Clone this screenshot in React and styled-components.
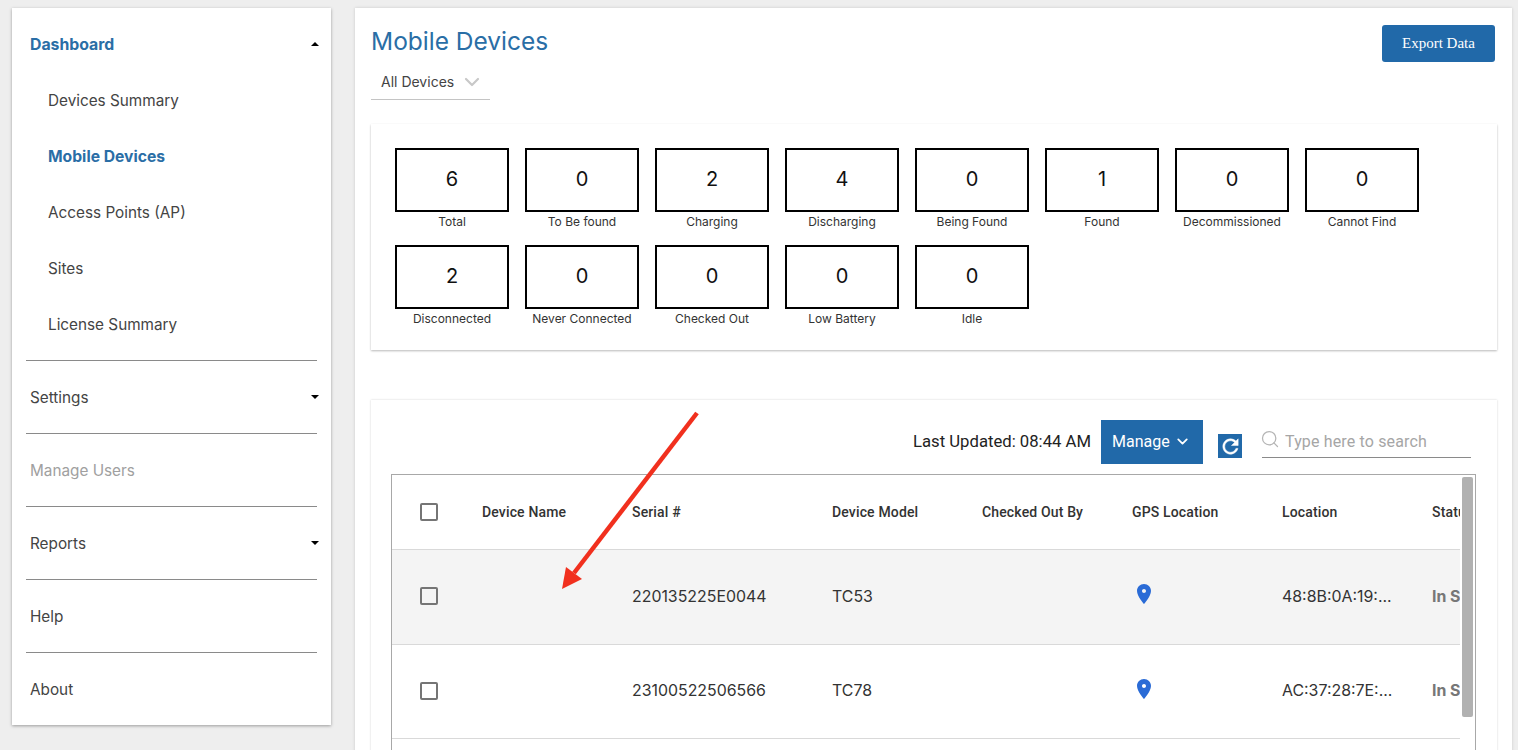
import * as React from "react";
import styled, { createGlobalStyle } from "styled-components";
import { ChevronDown, Search } from "lucide-react";

const BLUE = "#2169a9";
const INTER = `Inter, "Liberation Sans", sans-serif`;

const GlobalStyle = createGlobalStyle`
  html, body {
    margin: 0;
    height: 100%;
    overflow: hidden;
    background: #eeeeee;
    font-family: Roboto, "Liberation Sans", sans-serif;
  }
  * { box-sizing: border-box; }
`;

const menu = [
  { label: "Settings", caret: true },
  { label: "Manage Users", disabled: true },
  { label: "Reports", caret: true },
  { label: "Help" },
  { label: "About" },
];

const subItems = ["Devices Summary", "Mobile Devices", "Access Points (AP)", "Sites", "License Summary"];

const stats = [
  [6, "Total"],
  [0, "To Be found"],
  [2, "Charging"],
  [4, "Discharging"],
  [0, "Being Found"],
  [1, "Found"],
  [0, "Decommissioned"],
  [0, "Cannot Find"],
  [2, "Disconnected"],
  [0, "Never Connected"],
  [0, "Checked Out"],
  [0, "Low Battery"],
  [0, "Idle"],
];

const columns = ["Device Name", "Serial #", "Device Model", "Checked Out By", "GPS Location", "Location", "Status"];

const devices = [
  { serial: "220135225E0044", model: "TC53", location: "48:8B:0A:19:...", shaded: true },
  { serial: "23100522506566", model: "TC78", location: "AC:37:28:7E:..." },
];

function PinIcon() {
  return (
    <Pin viewBox="0 0 24 24" width="24" height="24">
      <path
        fill="#2a6bd6"
        d="M12 2C8.13 2 5 5.13 5 9c0 5.25 7 13 7 13s7-7.75 7-13c0-3.87-3.13-7-7-7zm0 9c-1.1 0-2-.9-2-2s.9-2 2-2 2 .9 2 2-.9 2-2 2z"
      />
    </Pin>
  );
}

function RefreshIcon() {
  return (
    <svg viewBox="0 0 24 24" width="23" height="23">
      <path
        fill="#fff"
        stroke="#fff"
        strokeWidth="0.5"
        d="M17.65 6.35C16.2 4.9 14.21 4 12 4c-4.42 0-7.99 3.58-7.99 8s3.57 8 7.99 8c3.73 0 6.84-2.55 7.73-6h-2.08c-.82 2.33-3.04 4-5.65 4-3.31 0-6-2.69-6-6s2.69-6 6-6c1.66 0 3.14.69 4.22 1.78L13 11h7V4l-2.35 2.35z"
      />
    </svg>
  );
}

export default function App() {
  return (
    <Page>
      <GlobalStyle />
      <Sidebar>
        <NavHeader>
          <GroupTitle>Dashboard</GroupTitle>
          <Caret $up />
        </NavHeader>
        <SubList>
          {subItems.map((item) => (
            <SubItem key={item} $active={item === "Mobile Devices"}>
              {item}
            </SubItem>
          ))}
        </SubList>
        {menu.map((item) => (
          <NavRow key={item.label} $disabled={item.disabled}>
            {item.label}
            {item.caret && <Caret />}
          </NavRow>
        ))}
      </Sidebar>

      <Main>
        <TitleBar>
          <div>
            <Title>Mobile Devices</Title>
            <DeviceSelect>
              All Devices
              <ChevronDown size={24} color="#c8c8c8" strokeWidth={2.2} />
            </DeviceSelect>
          </div>
          <ExportButton>Export Data</ExportButton>
        </TitleBar>

        <StatsCard>
          {stats.map(([value, label]) => (
            <Stat key={label}>
              <StatBox>{value}</StatBox>
              <StatLabel>{label}</StatLabel>
            </Stat>
          ))}
        </StatsCard>

        <TableCard>
          <Toolbar>
            <Updated>Last Updated: 08:44 AM</Updated>
            <ManageButton>
              Manage
              <ChevronDown size={17} strokeWidth={2.5} />
            </ManageButton>
            <RefreshButton>
              <RefreshIcon />
            </RefreshButton>
            <SearchField>
              <SearchGlyph size={20} color="#b5b5b5" strokeWidth={1.5} />
              <SearchInput placeholder="Type here to search" />
            </SearchField>
          </Toolbar>

          <TableFrame>
            <HeaderRow>
              <CheckCell>
                <CheckBox />
              </CheckCell>
              {columns.map((col) => (
                <HeadCell key={col}>{col}</HeadCell>
              ))}
            </HeaderRow>
            {devices.map((d) => (
              <BodyRow key={d.serial} $shaded={d.shaded}>
                <CheckCell>
                  <CheckBox />
                </CheckCell>
                <Cell />
                <Cell>{d.serial}</Cell>
                <Cell>{d.model}</Cell>
                <Cell />
                <Cell>
                  <PinIcon />
                </Cell>
                <Cell>{d.location}</Cell>
                <StatusCell>In Service</StatusCell>
              </BodyRow>
            ))}
            <Scrollbar />
          </TableFrame>
        </TableCard>
      </Main>

      <Arrow viewBox="0 0 1518 750" width="1518" height="750">
        <line x1="697" y1="413" x2="574" y2="573" stroke="#f1301e" strokeWidth="4.5" />
        <polygon points="562,589 566,567 582,579" fill="#f1301e" />
      </Arrow>
    </Page>
  );
}

const Page = styled.div`
  display: flex;
  align-items: flex-start;
  gap: 24px;
  height: 750px;
  padding: 8px 6px 0 12px;
  overflow: hidden;
`;

const Sidebar = styled.nav`
  flex: 0 0 319px;
  height: 717px;
  padding: 8px 14px 0;
  background: #fff;
  box-shadow: 0 1px 3px rgba(0, 0, 0, 0.35);
  color: #444;
  font-family: ${INTER};
  font-size: 15.3px;
`;

const NavHeader = styled.div`
  display: flex;
  align-items: center;
  justify-content: space-between;
  height: 56px;
  padding-left: 4px;
`;

const GroupTitle = styled.span`
  color: #2a6ea6;
  font-weight: 700;
  font-size: 15.8px;
`;

const Caret = styled.span`
  width: 0;
  height: 0;
  margin-right: -2px;
  border-left: 4px solid transparent;
  border-right: 4px solid transparent;
  ${(p) => (p.$up ? "border-bottom: 4px solid #000;" : "border-top: 4px solid #000;")}
`;

const SubList = styled.div`
  padding-bottom: 8px;
`;

const SubItem = styled.div`
  display: flex;
  align-items: center;
  height: 56px;
  padding-left: 22px;
  color: ${(p) => (p.$active ? "#2a6ea6" : "#444")};
  font-weight: ${(p) => (p.$active ? 700 : 400)};
  font-size: ${(p) => (p.$active ? "15.7px" : "inherit")};
`;

const NavRow = styled.div`
  display: flex;
  align-items: center;
  justify-content: space-between;
  height: 73px;
  padding-left: 4px;
  border-top: 1px solid #8a8a8a;
  color: ${(p) => (p.$disabled ? "#a0a0a0" : "#444")};
`;

const Main = styled.main`
  flex: 0 0 1157px;
  height: 800px;
  padding: 17px 15px 0 16px;
  background: #fff;
  box-shadow: 0 0 3px rgba(0, 0, 0, 0.15);
`;

const TitleBar = styled.header`
  display: flex;
  align-items: flex-start;
  justify-content: space-between;
  height: 99px;
  padding-right: 2px;
`;

const Title = styled.h1`
  margin: 0;
  color: #2a6ea6;
  font-family: ${INTER};
  font-size: 24.5px;
  font-weight: 400;
  line-height: 32px;
`;

const DeviceSelect = styled.div`
  display: flex;
  align-items: center;
  justify-content: space-between;
  width: 119px;
  height: 36px;
  margin-top: 7px;
  padding: 0 6px 0 10px;
  border-bottom: 1px solid #c4c4c4;
  color: #444;
  font-family: ${INTER};
  font-size: 14px;
`;

const ExportButton = styled.button`
  width: 113px;
  height: 37px;
  margin-top: 0;
  border: 0;
  border-radius: 3px;
  background: ${BLUE};
  color: #fff;
  font-family: "Liberation Serif", serif;
  font-size: 15px;
`;

const StatsCard = styled.section`
  display: grid;
  grid-template-columns: repeat(8, 114px);
  grid-auto-rows: 81px;
  column-gap: 16px;
  row-gap: 16px;
  width: 1126px;
  height: 226px;
  padding: 24px;
  background: #fff;
  box-shadow: 0 1px 2px rgba(0, 0, 0, 0.28);
  font-family: ${INTER};
`;

const Stat = styled.div`
  display: flex;
  flex-direction: column;
  align-items: center;
`;

const StatBox = styled.div`
  display: flex;
  align-items: center;
  justify-content: center;
  width: 114px;
  height: 64px;
  padding-bottom: 3px;
  border: 2px solid #000;
  color: #111;
  font-size: 20px;
`;

const StatLabel = styled.div`
  margin-top: 3px;
  color: #333;
  font-size: 12px;
  line-height: 14px;
  white-space: nowrap;
`;

const TableCard = styled.section`
  width: 1126px;
  height: 400px;
  margin-top: 50px;
  padding: 20px 20px 0;
  background: #fff;
  box-shadow: 0 0 2px rgba(0, 0, 0, 0.18);
`;

const Toolbar = styled.div`
  display: flex;
  align-items: flex-start;
  height: 54px;
  padding-left: 522px;
`;

const Updated = styled.span`
  width: 188px;
  margin-top: 12px;
  color: #222;
  font-size: 16.7px;
  line-height: 20px;
  white-space: nowrap;
`;

const ManageButton = styled.button`
  display: flex;
  align-items: center;
  gap: 4px;
  width: 102px;
  height: 44px;
  padding: 0 0 2px 11px;
  border: 0;
  background: ${BLUE};
  color: #fff;
  font-family: inherit;
  font-size: 16px;
`;

const RefreshButton = styled.button`
  display: flex;
  align-items: center;
  justify-content: center;
  width: 24px;
  height: 24px;
  margin: 14px 0 0 15px;
  padding: 0;
  border: 0;
  background: ${BLUE};
`;

const SearchField = styled.label`
  display: flex;
  align-items: center;
  gap: 5px;
  width: 209px;
  height: 38px;
  margin-left: 20px;
  padding-top: 5px;
  border-bottom: 1px solid #8a8a8a;
`;

const SearchGlyph = styled(Search)`
  flex: none;
  margin: -4px 0 0 -2px;
`;

const SearchInput = styled.input`
  flex: 1;
  min-width: 0;
  border: 0;
  outline: 0;
  padding: 0;
  background: transparent;
  font-family: inherit;
  font-size: 16px;
  letter-spacing: 0.15px;
  &::placeholder {
    color: #a6a6a6;
    opacity: 1;
  }
`;

const TableFrame = styled.div`
  position: relative;
  width: 1085px;
  height: 400px;
  border: 1px solid #a8a8a8;
  padding-right: 15px;
  overflow: hidden;
`;

const rowGrid = `
  display: grid;
  grid-template-columns: 90px 150px 200px repeat(5, 150px);
  overflow: hidden;
`;

const HeaderRow = styled.div`
  ${rowGrid}
  align-items: center;
  height: 75px;
  border-bottom: 1px solid #d9d9d9;
`;

const BodyRow = styled.div`
  ${rowGrid}
  align-items: center;
  height: 94.5px;
  padding-bottom: 1px;
  border-bottom: 1px solid #d9d9d9;
  background: ${(p) => (p.$shaded ? "#f4f4f4" : "#fff")};
`;

const CheckCell = styled.div`
  display: flex;
  padding-left: 28px;
`;

const CheckBox = styled.span`
  display: block;
  width: 18px;
  height: 18px;
  border: 2px solid #757575;
  border-radius: 2px;
  background: transparent;
`;

const HeadCell = styled.div`
  color: #333;
  font-size: 14px;
  font-weight: 500;
  letter-spacing: 0.15px;
  white-space: nowrap;
`;

const Cell = styled.div`
  color: #333;
  font-family: ${INTER};
  font-size: 15.9px;
  white-space: nowrap;
`;

const StatusCell = styled(Cell)`
  color: #777;
  font-weight: 700;
`;

const Pin = styled.svg`
  display: block;
  margin: -4px 0 0 0;
`;

const Scrollbar = styled.div`
  position: absolute;
  top: 2px;
  right: 2px;
  width: 11px;
  height: 240px;
  border-radius: 2px;
  background: #b1b1b1;
`;

const Arrow = styled.svg`
  position: absolute;
  top: 0;
  left: 0;
  pointer-events: none;
`;
